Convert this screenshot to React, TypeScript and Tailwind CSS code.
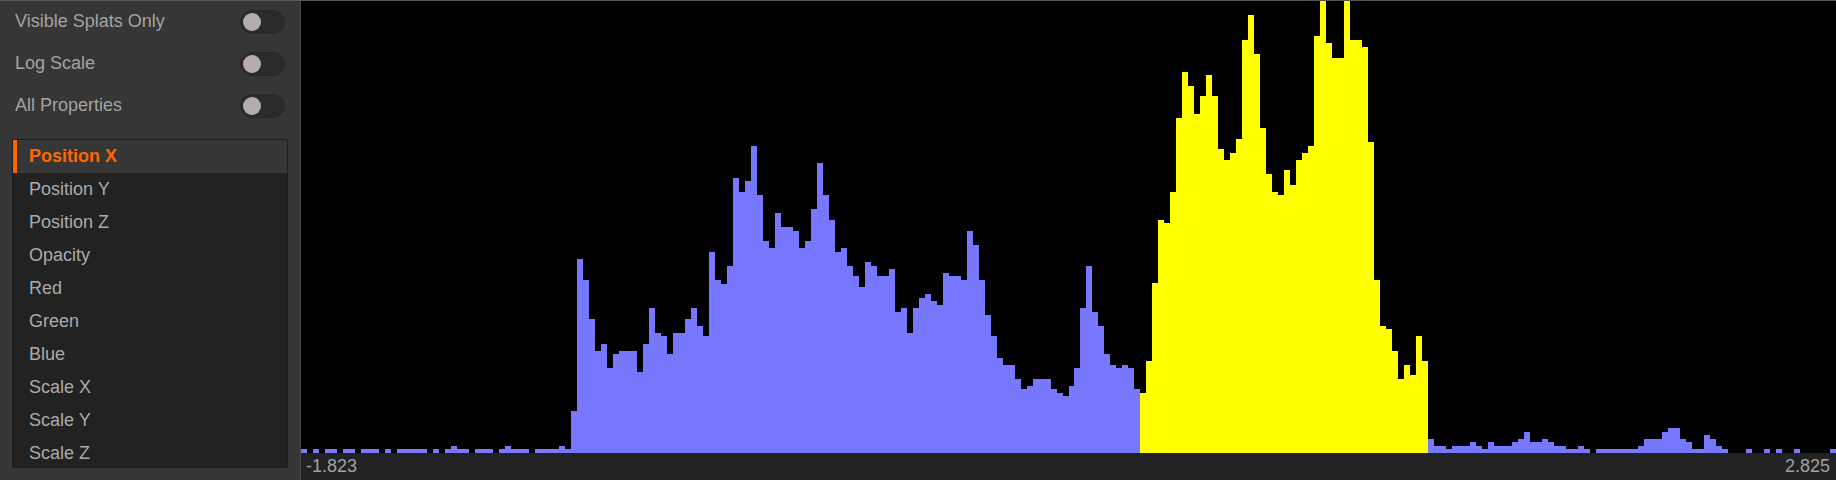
const toggles = ["Visible Splats Only", "Log Scale", "All Properties"];
const properties = ["Position X", "Position Y", "Position Z", "Opacity", "Red", "Green", "Blue", "Scale X", "Scale Y", "Scale Z"];

// bin heights in px, read off the histogram
const bins = [
  4, 0, 4, 0, 4, 4, 0, 4, 4, 0, 4, 4, 4, 0, 4, 0,
  4, 4, 4, 4, 4, 0, 4, 0, 4, 7, 4, 4, 0, 4, 4, 4,
  0, 4, 7, 4, 4, 4, 0, 4, 4, 4, 4, 7, 4, 42, 194, 173,
  134, 102, 109, 85, 99, 102, 102, 102, 81, 109, 145, 120, 117, 99, 120, 120,
  134, 145, 127, 117, 201, 173, 169, 187, 275, 261, 272, 307, 258, 212, 205, 240,
  226, 226, 222, 205, 212, 244, 290, 258, 233, 201, 205, 187, 177, 166, 191, 187,
  177, 177, 184, 141, 145, 120, 145, 155, 159, 152, 148, 180, 177, 177, 173, 222,
  208, 173, 138, 117, 95, 88, 88, 74, 64, 67, 74, 74, 74, 64, 60, 57,
  67, 85, 145, 187, 141, 127, 99, 88, 85, 88, 85, 64, 60, 92, 170, 233,
  230, 261, 335, 381, 367, 339, 357, 378, 357, 304, 293, 300, 314, 413, 438, 399,
  325, 279, 261, 258, 283, 268, 293, 300, 307, 417, 452, 410, 395, 395, 452, 413,
  413, 406, 311, 173, 127, 124, 102, 74, 88, 78, 117, 92, 14, 7, 7, 4,
  7, 7, 7, 11, 7, 4, 11, 7, 7, 7, 11, 14, 21, 11, 11, 14,
  11, 7, 7, 4, 4, 7, 4, 0, 4, 4, 4, 4, 4, 4, 4, 7,
  14, 14, 14, 21, 25, 25, 14, 11, 4, 4, 18, 14, 7, 4, 0, 0,
  0, 4, 0, 0, 4, 0, 4, 0, 0, 4, 0, 0, 0, 0, 0, 4,
];

const chartWidth = 1535;
const chartHeight = 452;
const binWidth = chartWidth / bins.length;

function Toggle({ label }: { label: string }) {
  return (
    <div className="flex h-[24px] items-center justify-between pl-[15px] pr-[15px] mb-[18px]">
      <span className="-mt-[2px] text-[18px] text-[#a3a3a3]">{label}</span>
      <div className="flex h-[24px] w-[45px] items-center rounded-full border border-[#272727] bg-[#2b2b2b] pl-[2px]">
        <div className="h-[18px] w-[18px] rounded-full bg-[#b5adad]" />
      </div>
    </div>
  );
}

function PropertyList() {
  return (
    <div className="mx-[12px] mt-[21px] h-[329px] overflow-hidden rounded-[2px] border border-[#1c1c1c] bg-[#222222]">
      {properties.map((name, i) => (
        <div
          key={name}
          className={
            i === 0
              ? "flex h-[33px] items-center border-l-[4px] border-[#ff6600] bg-[#363636] pl-[12px] text-[18px] font-bold text-[#ff6600]"
              : "flex h-[33px] items-center pl-[16px] text-[18px] text-[#aaaaaa]"
          }
        >
          {name}
        </div>
      ))}
    </div>
  );
}

function Histogram() {
  return (
    <svg
      width={chartWidth}
      height={chartHeight}
      viewBox={`0 0 ${chartWidth} ${chartHeight}`}
      shapeRendering="crispEdges"
      className="block"
    >
      {bins.map((h, i) => (
        <rect
          key={i}
          x={i * binWidth}
          y={chartHeight - h}
          width={binWidth}
          height={h}
          fill={i >= 140 && i <= 187 ? "#ffff00" : "#7878ff"}
        />
      ))}
    </svg>
  );
}

export default function App() {
  return (
    <div className="flex h-[480px] w-[1836px] border-t border-[#555555] bg-[#363636] font-['Liberation_Sans',Arial,sans-serif]">
      <div className="w-[300px] shrink-0 pt-[9px]">
        {toggles.map((label) => (
          <Toggle key={label} label={label} />
        ))}
        <PropertyList />
      </div>
      <div className="flex flex-1 flex-col border-l border-[#484848]">
        <div className="h-[452px] bg-black">
          <Histogram />
        </div>
        <div className="flex flex-1 items-center justify-between bg-[#222222] pl-[5px] pr-[6px] text-[18px] text-[#a0a0a0]">
          <span>-1.823</span>
          <span>2.825</span>
        </div>
      </div>
    </div>
  );
}
